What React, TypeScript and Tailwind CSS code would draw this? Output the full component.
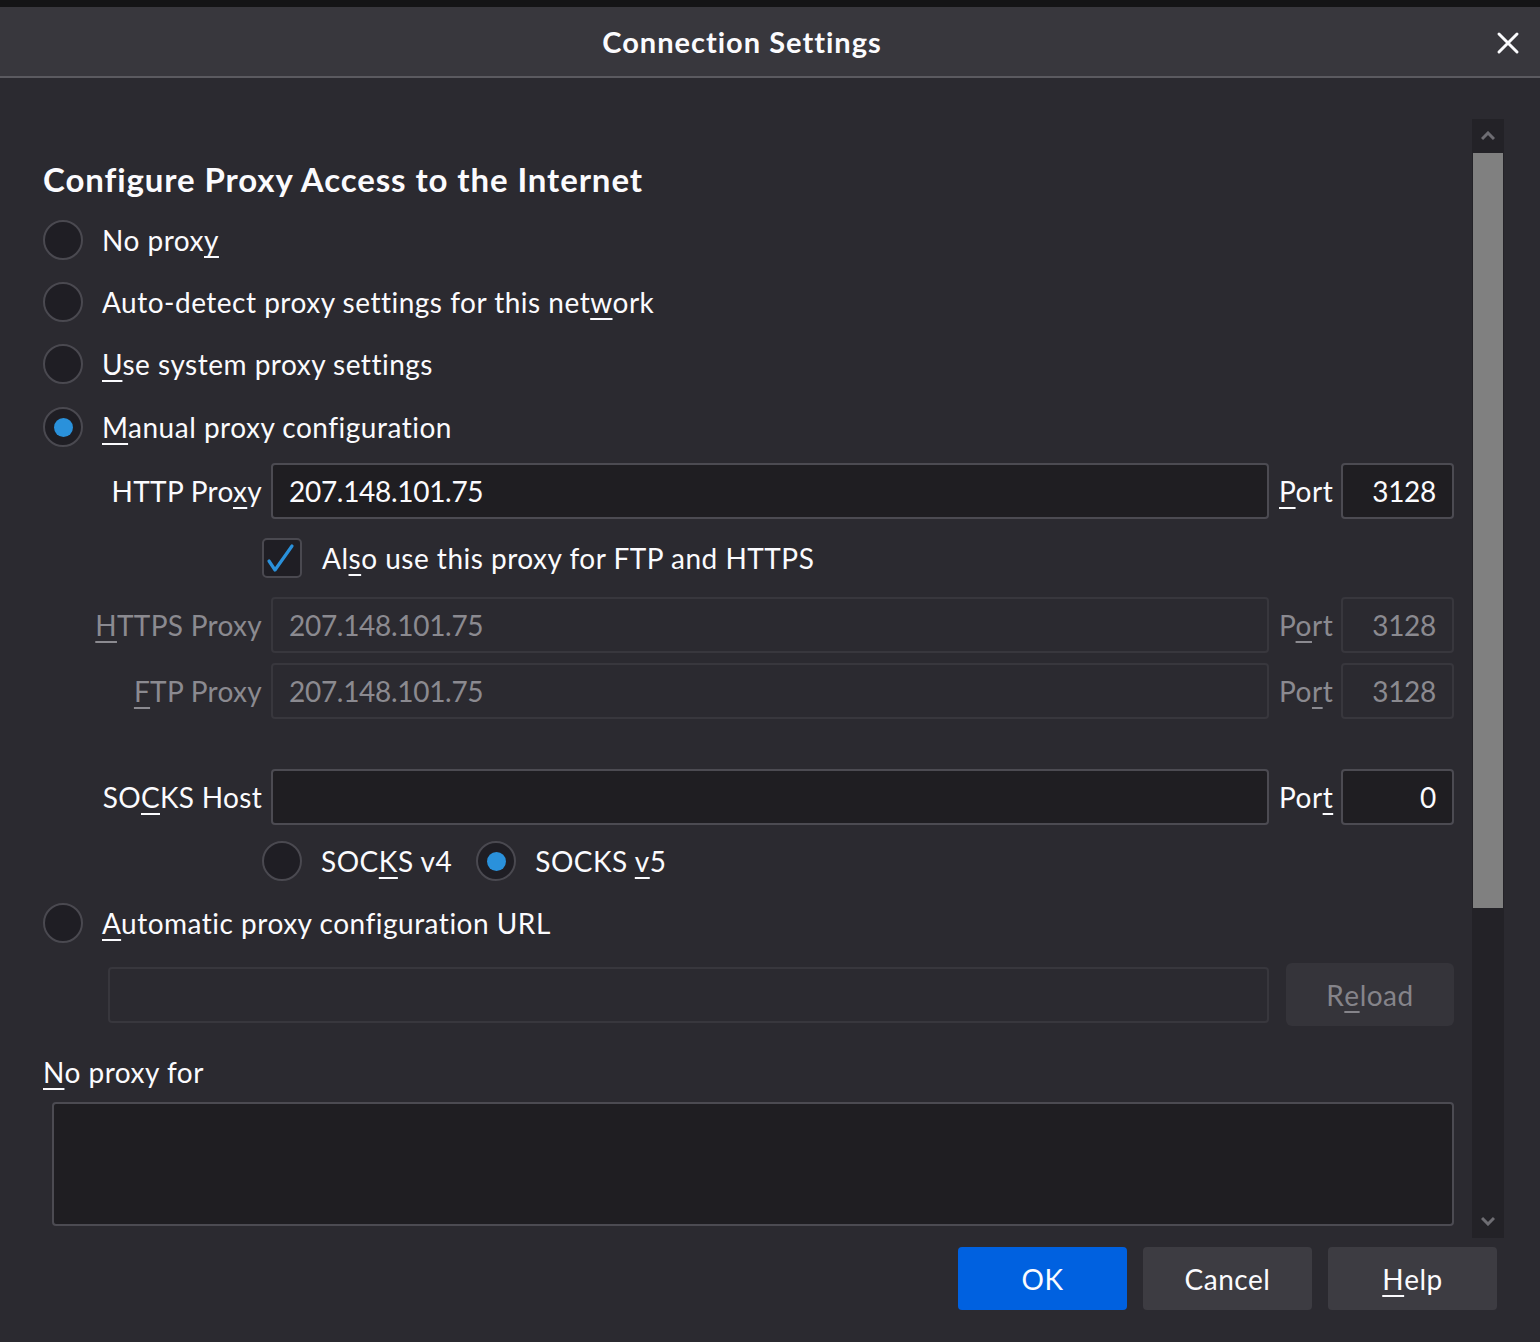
import React from 'react'

const FONT = { fontFamily: '"Segoe UI", Lato, "Noto Sans", sans-serif' }

// underlined access key
const K = ({ children }: { children: React.ReactNode }) => (
  <span className="underline decoration-2 underline-offset-[5px]">{children}</span>
)

const Radio = ({ checked = false }: { checked?: boolean }) => (
  <span className="flex h-[40px] w-[40px] shrink-0 items-center justify-center rounded-full border-2 border-[#4a4950] bg-[#1f1e24]">
    {checked && <span className="h-[19px] w-[19px] rounded-full bg-[#2a91db]" />}
  </span>
)

const RadioRow = ({ checked, children }: { checked?: boolean; children: React.ReactNode }) => (
  <div className="flex h-[40px] items-center gap-[19px]">
    <Radio checked={checked} />
    <span className="text-[28px] leading-none text-[#fbfbfe]">{children}</span>
  </div>
)

const Field = ({ value, disabled, right }: { value?: string; disabled?: boolean; right?: boolean }) => (
  <div
    className={`flex h-[56px] items-center rounded-[4px] border-2 px-[16px] text-[28px] tracking-[-0.3px] ${
      disabled ? 'border-[#38373d] bg-[#2b2a30] text-[#8b8a90]' : 'border-[#4c4b52] bg-[#1f1e22] text-[#fbfbfe]'
    } ${right ? 'justify-end' : ''}`}
  >
    {value}
  </div>
)

const ProxyRow = ({
  label,
  port,
  value,
  portValue,
  disabled,
}: {
  label: React.ReactNode
  port: React.ReactNode
  value?: string
  portValue: string
  disabled?: boolean
}) => (
  <div className={`flex items-center ${disabled ? 'text-[#8b8a90]' : 'text-[#fbfbfe]'}`}>
    <div className="w-[219px] shrink-0 whitespace-nowrap text-right text-[28px] tracking-[0.3px]">{label}</div>
    <div className="ml-[9px] flex-1">
      <Field value={value} disabled={disabled} />
    </div>
    <div className="ml-[10px] w-[53px] shrink-0 whitespace-nowrap text-[28px]">{port}</div>
    <div className="ml-[9px] w-[113px] shrink-0">
      <Field value={portValue} disabled={disabled} right />
    </div>
  </div>
)

export default function App() {
  return (
    <div style={FONT} className="flex h-[1342px] w-[1540px] flex-col overflow-hidden bg-[#2b2a30] tracking-[0.5px] text-[#fbfbfe]">
      <div className="h-[7px] bg-[#141416]" />
      <div className="relative flex h-[71px] items-center justify-center border-b-2 border-[#5b5a60] bg-[#38373d] pr-[56px]">
        <span className="text-[29px] font-bold tracking-[1px]">Connection Settings</span>
        <svg className="absolute right-[20px] top-[24px]" width="24" height="24" viewBox="0 0 24 24">
          <path d="M3 3 L21 21 M21 3 L3 21" stroke="#fbfbfe" strokeWidth="3" strokeLinecap="round" />
        </svg>
      </div>

      <div className="flex flex-1 pt-[41px]">
        <div className="flex h-[1119px] flex-1 flex-col pl-[43px] pr-[18px]">
          <h2 className="mt-[40px] text-[33px] font-bold leading-[40px] tracking-[0.9px]">Configure Proxy Access to the Internet</h2>

          <div className="mt-[21px] flex flex-col gap-[22px]">
            <RadioRow>
              No prox<K>y</K>
            </RadioRow>
            <RadioRow>
              Auto-detect proxy settings for this net<K>w</K>ork
            </RadioRow>
            <RadioRow>
              <K>U</K>se system proxy settings
            </RadioRow>
            <div className="mt-[1px]">
              <RadioRow checked>
                <K>M</K>anual proxy configuration
              </RadioRow>
            </div>
          </div>

          <div className="mt-[16px]">
            <ProxyRow
              label={
                <>
                  HTTP Pro<K>x</K>y
                </>
              }
              port={
                <>
                  <K>P</K>ort
                </>
              }
              value="207.148.101.75"
              portValue="3128"
            />
          </div>

          <div className="ml-[219px] mt-[20px] flex h-[38px] items-center gap-[20px]">
            <span className="flex h-[40px] w-[40px] items-center justify-center rounded-[5px] border-2 border-[#4a4950] bg-[#1f1e24]">
              <svg width="36" height="36" viewBox="0 0 36 36">
                <path d="M5 21 L11 30 L28 6" fill="none" stroke="#2a91db" strokeWidth="3.2" strokeLinecap="round" strokeLinejoin="round" />
              </svg>
            </span>
            <span className="text-[28px]">
              Al<K>s</K>o use this proxy for FTP and HTTPS
            </span>
          </div>

          <div className="mt-[20px]">
            <ProxyRow
              label={
                <>
                  <K>H</K>TTPS Proxy
                </>
              }
              port={
                <>
                  P<K>o</K>rt
                </>
              }
              value="207.148.101.75"
              portValue="3128"
              disabled
            />
          </div>
          <div className="mt-[10px]">
            <ProxyRow
              label={
                <>
                  <K>F</K>TP Proxy
                </>
              }
              port={
                <>
                  Po<K>r</K>t
                </>
              }
              value="207.148.101.75"
              portValue="3128"
              disabled
            />
          </div>

          <div className="mt-[50px]">
            <ProxyRow
              label={
                <>
                  SO<K>C</K>KS Host
                </>
              }
              port={
                <>
                  Por<K>t</K>
                </>
              }
              value=""
              portValue="0"
            />
          </div>

          <div className="ml-[219px] mt-[16px] flex items-center">
            <RadioRow>
              SOC<K>K</K>S v4
            </RadioRow>
            <div className="ml-[24px]">
              <RadioRow checked>
                SOCKS <K>v</K>5
              </RadioRow>
            </div>
          </div>

          <div className="mt-[22px]">
            <RadioRow>
              <K>A</K>utomatic proxy configuration URL
            </RadioRow>
          </div>

          <div className="ml-[65px] mt-[20px] flex items-center">
            <div className="flex-1">
              <Field value="" disabled />
            </div>
            <button className="ml-[17px] flex h-[63px] w-[168px] items-center justify-center rounded-[6px] bg-[#35343a] text-[28px] tracking-[0.5px] text-[#85848a]">
              R<K>e</K>load
            </button>
          </div>

          <div className="mt-[26px] h-[40px] text-[28px] leading-[40px]">
            <K>N</K>o proxy for
          </div>
          <div className="ml-[9px] mt-[10px] h-[124px] rounded-[4px] border-2 border-[#4c4b52] bg-[#1f1e22]" />
        </div>

        <div className="flex h-[1119px] w-[32px] flex-col bg-[#232227]">
          <div className="flex h-[34px] items-center justify-center">
            <svg width="14" height="10" viewBox="0 0 14 10">
              <path d="M1 8 L7 2 L13 8" fill="none" stroke="#6e6d73" strokeWidth="3" />
            </svg>
          </div>
          <div className="mx-[1px] h-[755px] bg-[#808080]" />
          <div className="flex-1" />
          <div className="flex h-[34px] items-center justify-center">
            <svg width="14" height="10" viewBox="0 0 14 10">
              <path d="M1 2 L7 8 L13 2" fill="none" stroke="#6e6d73" strokeWidth="3" />
            </svg>
          </div>
        </div>
        <div className="w-[36px]" />
      </div>

      <div className="flex h-[104px] items-start justify-end gap-[16px] pr-[43px] pt-[9px]">
        <button className="flex h-[63px] w-[169px] items-center justify-center rounded-[4px] bg-[#0061e0] text-[28px] tracking-[0.5px] text-[#fbfbfe]">
          OK
        </button>
        <button className="flex h-[63px] w-[169px] items-center justify-center rounded-[4px] bg-[#3d3c42] text-[28px] tracking-[0.5px] text-[#fbfbfe]">
          Cancel
        </button>
        <button className="flex h-[63px] w-[169px] items-center justify-center rounded-[4px] bg-[#3d3c42] text-[28px] tracking-[0.5px] text-[#fbfbfe]">
          <K>H</K>elp
        </button>
      </div>
    </div>
  )
}
